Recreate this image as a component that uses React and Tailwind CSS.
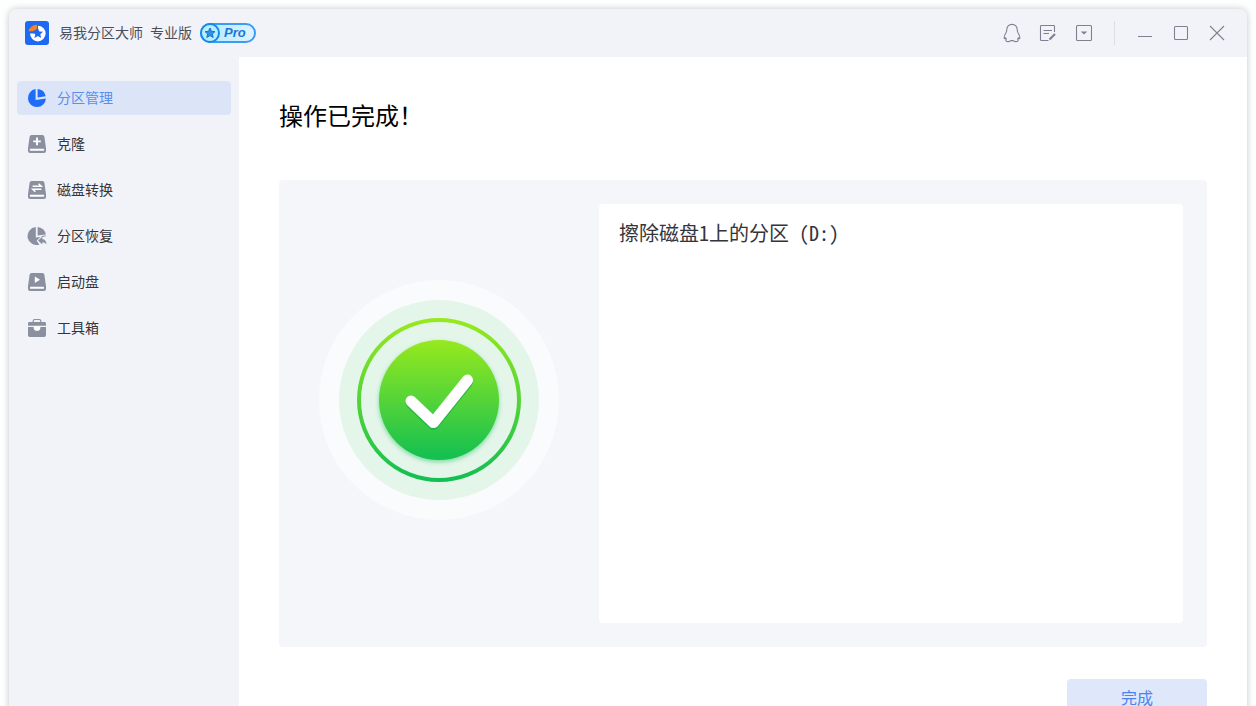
import { useState } from 'react';

const DiskBase = ({ children }) => (
  <svg viewBox="0 0 20 20" className="w-5 h-5 shrink-0" aria-hidden="true">
    <path d="M4.6 1h10.8a2 2 0 0 1 2 1.7L19 14.2v2.8a2 2 0 0 1-2 2H3a2 2 0 0 1-2-2v-2.8L2.6 2.7A2 2 0 0 1 4.6 1Z" fill="#8b90a0" />
    <rect x="3" y="14.8" width="14" height="2" rx="0.4" fill="#ffffff" />
    {children}
  </svg>
);

const PieIcon = () => (
  <svg viewBox="0 0 20 20" className="w-5 h-5 shrink-0" aria-hidden="true">
    <path d="M8.6 1.1A9 9 0 1 0 18.9 10.4L8.6 12Z" fill="#1f6cf9" />
    <path d="M10.6 1A9 9 0 0 1 18.7 8.2L10.6 9.6Z" fill="#1f6cf9" />
  </svg>
);

const CloneIcon = () => (
  <DiskBase>
    <path d="M10 3.6v7.6M6.2 7.4h7.6" stroke="#ffffff" strokeWidth="1.9" />
  </DiskBase>
);

const ConvertIcon = () => (
  <DiskBase>
    <path d="M5.6 6.3h8.6L11.6 3.8M14.4 9.3H5.8l2.6 2.4" fill="none" stroke="#ffffff" strokeWidth="1.5" />
  </DiskBase>
);

const RecoveryIcon = () => (
  <svg viewBox="0 0 20 20" className="w-5 h-5 shrink-0" aria-hidden="true">
    <path d="M8.8 1.1A9 9 0 1 0 12.4 18.6L9.6 14.8 13.4 10.9 8.8 11.6Z" fill="#8b90a0" />
    <path d="M10.6 1A9 9 0 0 1 18.8 8.4L10.6 9.6Z" fill="#8b90a0" />
    <path d="M11 14.6 15.3 10.8V13c2.6.4 4.2 2.4 4.3 5.6-1.2-1.700-2.400-2.400-4.300-2.400v2.200Z" fill="#8b90a0" />
    <path d="M14.600 10.600 18.600 9.800" stroke="#8b90a0" strokeWidth="1" />
  </svg>
);

const BootIcon = () => (
  <DiskBase>
    <path d="M7.8 4.4 13 7.7 7.8 11Z" fill="#ffffff" />
  </DiskBase>
);

const ToolboxIcon = () => (
  <svg viewBox="0 0 20 20" className="w-5 h-5 shrink-0" aria-hidden="true">
    <path d="M6.2 4.4V3a1.5 1.5 0 0 1 1.5-1.5h4.6A1.5 1.5 0 0 1 13.8 3v1.4" fill="none" stroke="#8b90a0" strokeWidth="1.2" />
    <path d="M2.4 4h15.2A1.4 1.4 0 0 1 19 5.4v2.4H1V5.4A1.4 1.4 0 0 1 2.4 4Z" fill="#8b90a0" />
    <path d="M1 9h5.600v.4a3.400 3.400 0 0 0 6.800 0V9H19v8.200a1.800 1.800 0 0 1-1.800 1.800H2.800A1.800 1.800 0 0 1 1 17.200Z" fill="#8b90a0" />
    <path d="M7 8.400h6v1a3 3 0 0 1-6 0Z" fill="#ffffff" />
  </svg>
);

const menuItems = [
  { id: 'partition', label: '分区管理', Icon: PieIcon },
  { id: 'clone', label: '克隆', Icon: CloneIcon },
  { id: 'convert', label: '磁盘转换', Icon: ConvertIcon },
  { id: 'recovery', label: '分区恢复', Icon: RecoveryIcon },
  { id: 'boot', label: '启动盘', Icon: BootIcon },
  { id: 'toolbox', label: '工具箱', Icon: ToolboxIcon },
];

const starPath = 'M0-5 1.5-1.7 5-1.4 2.4 1 3.2 4.5 0 2.6-3.2 4.5-2.4 1-5-1.4-1.5-1.7Z';

const Logo = () => (
  <svg viewBox="0 0 24 24" className="w-6 h-6" aria-hidden="true">
    <rect width="24" height="24" rx="3" fill="#1c6af4" />
    <circle cx="12.800" cy="12.600" r="7.800" fill="#ffffff" />
    <path d="M13 3.600V12.400L4 12.600A8.600 8.600 0 0 1 13 3.600Z" fill="#1c6af4" />
    <path d="M12 3.800V7.500L8.500 10.200H3.600A8.200 8.200 0 0 1 12 3.800Z" fill="#f5812a" />
    <path d={starPath} transform="translate(12.800 12.200) scale(1.050)" fill="#1c6af4" />
  </svg>
);

const ProBadge = () => (
  <span className="flex items-center w-14 h-5 rounded-full border-2 border-[#3d9bf5] bg-linear-to-r from-[#a9ecff] to-[#dff3ff]">
    <svg viewBox="0 0 20 20" className="w-5 h-5 -ml-0.5 shrink-0" aria-hidden="true">
      <circle cx="10" cy="10" r="9" fill="#b5f0ff" stroke="#1689ea" strokeWidth="2" />
      <path d={starPath} transform="translate(10 10)" fill="#2f90e6" stroke="#1769c9" strokeWidth="0.9" />
    </svg>
    <span className="pl-1 font-['Liberation_Sans',sans-serif] text-[13px] leading-4 font-bold italic text-[#1d74d8]">Pro</span>
  </span>
);

const TitleButton = ({ label, children }) => (
  <button type="button" aria-label={label} className="w-9 h-9 flex items-center justify-center">
    <svg viewBox="0 0 20 20" className="w-5 h-5" fill="none" stroke="#7d8191" strokeWidth="1.1">
      {children}
    </svg>
  </button>
);

const TitleBar = () => (
  <header className="h-12 shrink-0 flex items-center justify-between pl-4 pr-3">
    <div className="flex items-center gap-2">
      <Logo />
      <span className="pl-0.5 pb-0.5 text-[14px] leading-5 text-[#4b4f5c] whitespace-pre">易我分区大师 专业版</span>
      <ProBadge />
    </div>
    <div className="flex items-center">
      <TitleButton label="QQ">
        <path d="M10 1.4c-3.200 0-5.200 2.300-5.200 5.200 0 1.200-.1 2-.8 3.200-1.200 1.900-1.900 3.400-1.900 4.900 0 1.100.8 1.200 1.600.2l.6 1.300c-1 1-.4 2.300 1.400 2.400 1.700.1 2.800-.3 3.200-1h2.200c.4.700 1.500 1.100 3.200 1 1.800-.1 2.400-1.400 1.400-2.400l.6-1.300c.8 1 1.600.9 1.600-.2 0-1.500-.7-3-1.900-4.900-.7-1.200-.8-2-.8-3.200 0-2.900-2-5.200-5.200-5.200Z" />
      </TitleButton>
      <TitleButton label="反馈">
        <path d="M16.500 9V3.300a.8.800 0 0 0-.8-.8H3.300a.8.800 0 0 0-.8.800v13.400c0 .4.300.8.800.8h7.200M5.500 7.500h8.500M5.500 10.500h5.500" />
        <path d="M11.500 16.500 17 11" strokeWidth="2.200" />
      </TitleButton>
      <TitleButton label="菜单">
        <rect x="2.500" y="2.500" width="15" height="15" rx="1" />
        <path d="M6.800 8.600h6.400L10 11.600Z" fill="#7d8191" stroke="none" />
      </TitleButton>
      <span className="w-px h-6 ml-3 mr-3 bg-[#dcdee6]" />
      <TitleButton label="最小化">
        <path d="M3 13.500h14" />
      </TitleButton>
      <TitleButton label="最大化">
        <rect x="3.500" y="3.500" width="13" height="13" rx="1" />
      </TitleButton>
      <TitleButton label="关闭">
        <path d="M3 3 17 17M17 3 3 17" />
      </TitleButton>
    </div>
  </header>
);

const SuccessGraphic = () => (
  <svg viewBox="0 0 240 240" className="w-60 h-60" role="img" aria-label="成功">
    <defs>
      <linearGradient id="green" x1="0" y1="0" x2="0" y2="1">
        <stop offset="0" stopColor="#97e91e" />
        <stop offset="1" stopColor="#12bf52" />
      </linearGradient>
      <filter id="discShadow" x="-20%" y="-20%" width="140%" height="140%">
        <feDropShadow dx="0" dy="2" stdDeviation="2" floodColor="#12bf52" floodOpacity="0.5" />
      </filter>
      <filter id="tickShadow" x="-20%" y="-20%" width="140%" height="140%">
        <feDropShadow dx="0" dy="2" stdDeviation="0.6" floodColor="#14b050" floodOpacity="0.8" />
      </filter>
    </defs>
    <circle cx="120" cy="120" r="120" fill="#fafbfd" />
    <circle cx="120" cy="120" r="100" fill="#e4f5e9" />
    <circle cx="120" cy="120" r="80" fill="none" stroke="url(#green)" strokeWidth="4" />
    <circle cx="120" cy="120" r="60" fill="url(#green)" filter="url(#discShadow)" />
    <path d="M92 121 114.500 142.500 148.500 100" fill="none" stroke="#ffffff" strokeWidth="11" strokeLinecap="round" strokeLinejoin="round" filter="url(#tickShadow)" />
  </svg>
);

const App = () => {
  const [active, setActive] = useState('partition');

  return (
    <div className="h-screen overflow-hidden bg-[#fdfefe] pt-[9px] px-[9px] font-['Noto_Sans_Mono_CJK_SC','Noto_Sans_CJK_SC',sans-serif]">
      {/* The window runs on below the fold */}
      <div className="h-[calc(100vh+30px)] flex flex-col rounded-lg overflow-hidden bg-[#f2f3f8] shadow-[0_0_7px_rgba(0,0,0,0.22)]">
        <TitleBar />

        <div className="flex-1 min-h-0 flex">
          {/* Sidebar */}
          <nav className="w-[230px] shrink-0 pt-6 px-2 flex flex-col gap-3">
            {menuItems.map(({ id, label, Icon }) => (
              <button
                key={id}
                type="button"
                onClick={() => setActive(id)}
                className={`h-[34px] flex items-center gap-2.5 px-2.5 rounded text-[14px] leading-5 ${
                  active === id ? 'bg-[#dce5f7] text-[#5b8def]' : 'text-[#33353d]'
                }`}
              >
                <Icon />
                <span className="pb-0.5">{label}</span>
              </button>
            ))}
          </nav>

          {/* Content */}
          <main className="flex-1 min-w-0 flex flex-col bg-white pt-10 px-10 pb-[30px]">
            <h1 className="text-[24px] leading-9 font-medium text-black">操作已完成！</h1>

            <section className="flex-1 min-h-0 mt-[47px] flex p-6 pl-0 rounded bg-[#f5f6fa]">
              <div className="w-80 shrink-0 pt-[76px] flex justify-center items-start">
                <SuccessGraphic />
              </div>
              <ul className="flex-1 min-w-0 rounded bg-white px-5 py-4">
                <li className="text-[20px] leading-[26px] text-[#33353d]">擦除磁盘1上的分区 (D:)</li>
              </ul>
            </section>

            <div className="mt-8 flex justify-end">
              <button type="button" className="w-[140px] h-9 rounded bg-[#dfe7fb] text-[16px] leading-6 text-[#4a84ee]">
                完成
              </button>
            </div>
          </main>
        </div>
      </div>
    </div>
  );
};

export default App;
